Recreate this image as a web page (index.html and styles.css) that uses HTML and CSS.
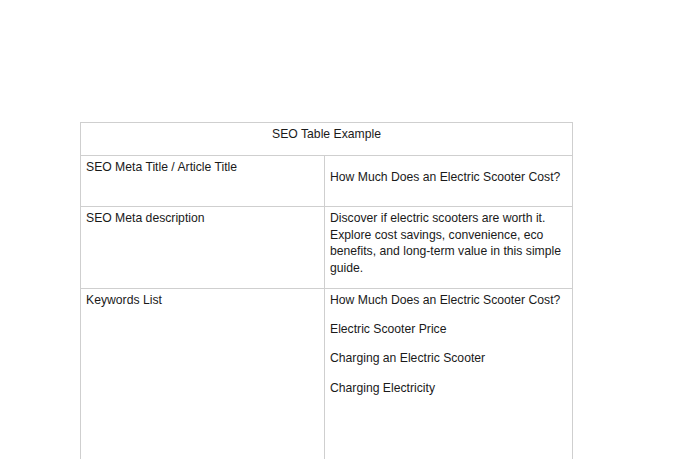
FILE: index.html
```html
<!DOCTYPE html>
<html lang="en">
<head>
<meta charset="utf-8">
<title>SEO Table Example</title>
<link rel="stylesheet" href="styles.css">
</head>
<body>
<div class="seo-table">
  <div class="cell cell-head"><p>SEO Table Example</p></div>

  <div class="cell row-title"><p>SEO Meta Title / Article Title</p></div>
  <div class="cell row-title"><p class="title-value">How Much Does an Electric Scooter Cost?</p></div>

  <div class="cell row-desc"><p>SEO Meta description</p></div>
  <div class="cell row-desc"><p>Discover if electric scooters are worth it. Explore cost savings, convenience, eco benefits, and long-term value in this simple guide.</p></div>

  <div class="cell row-keys"><p>Keywords List</p></div>
  <div class="cell row-keys">
    <p class="kw">How Much Does an Electric Scooter Cost?</p>
    <p class="kw">Electric Scooter Price</p>
    <p class="kw">Charging an Electric Scooter</p>
    <p class="kw">Charging Electricity</p>
  </div>
</div>
</body>
</html>
```

FILE: styles.css
```css
html, body {
  margin: 0;
  padding: 0;
  background: #ffffff;
}

body {
  font-family: "Liberation Sans", Arial, sans-serif;
  font-size: 12.2px;
  line-height: 16.7px;
  color: #1a1a1a;
  overflow: hidden;
  height: 459px;
}

.seo-table {
  margin: 122px 0 0 80px;
  width: 491px;
  padding: 1px 1px 0 1px;
  background: #cfcfcf;
  display: grid;
  grid-template-columns: 243px 247px;
  grid-template-rows: 32px 50px 81px 170px;
  gap: 1px;
}

.cell {
  background: #ffffff;
  padding: 3px 5px 0 5px;
}

.cell p {
  margin: 0;
}

.cell-head {
  grid-column: 1 / 3;
  text-align: center;
}

.title-value {
  margin-top: 10px !important;
}

.kw + .kw {
  margin-top: 12.5px;
}
```
